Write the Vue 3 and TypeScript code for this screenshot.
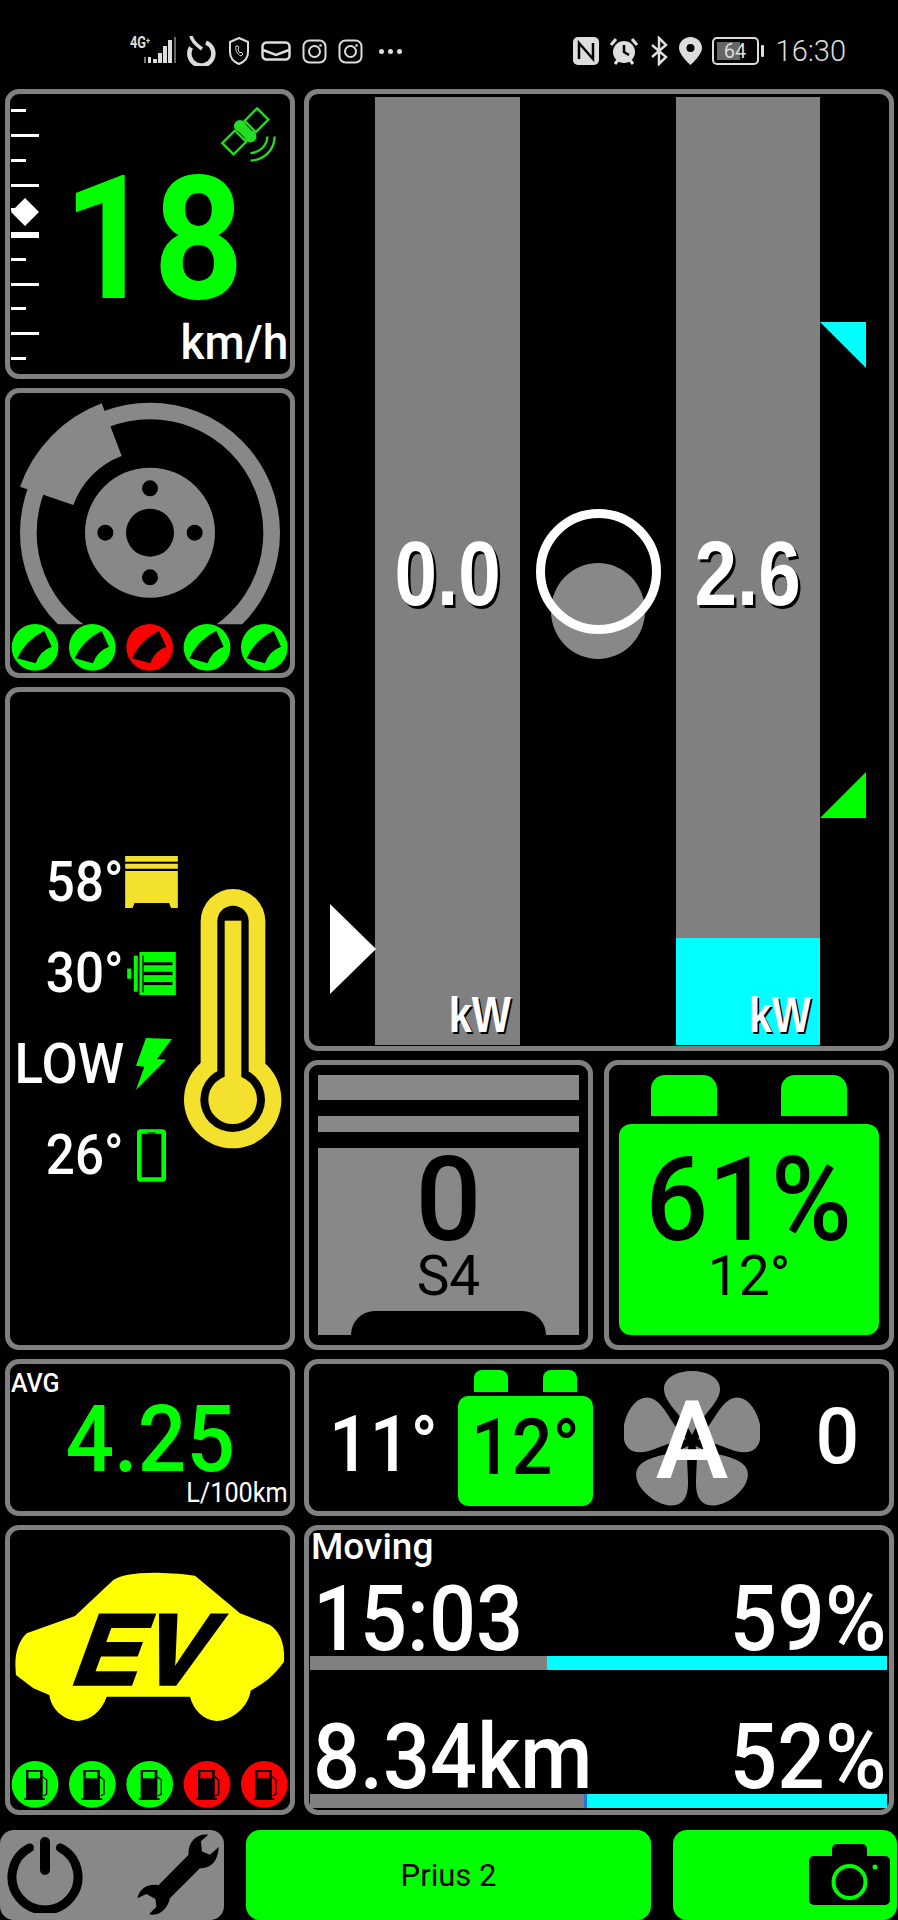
<template>
  <div class="page">
    <div class="status">
      <div class="status-group left">
        <div class="net">
          <span class="net-type">4G<sup>+</sup></span>
          <svg width="32" height="28" viewBox="0 0 32 28">
            <g fill="#ddd">
              <rect x="0" y="20" width="2" height="6" fill="#777" />
              <rect x="4" y="20" width="3" height="6" />
              <rect x="9" y="22" width="4" height="4" />
              <rect x="14" y="16" width="4" height="10" />
              <rect x="19" y="9" width="4" height="17" />
              <rect x="24" y="3" width="4" height="23" />
              <rect x="30" y="0" width="2" height="26" fill="#666" />
            </g>
          </svg>
        </div>
        <svg width="30" height="30" viewBox="0 0 30 30" fill="none" stroke="#ddd">
          <path d="M19 6.500a12 12 0 1 1-15 5" stroke-width="4.500" />
          <path d="M4 0c1 6 7 10 11 13" stroke-width="3.500" />
        </svg>
        <svg width="22" height="28" viewBox="0 0 22 28" fill="none" stroke="#ddd" stroke-width="2">
          <path d="M11 1l9 4v10c0 6-4 10-9 12C6 25 2 21 2 15V5z" />
          <path d="M8 9c-1 4 1 8 5 10l2-2-2-2-1 1c-1-1-2-3-2-4l1-1-1-2z" stroke-width="1" />
        </svg>
        <svg width="30" height="20" viewBox="0 0 30 20" fill="none" stroke="#ddd" stroke-width="2.500">
          <rect x="1.500" y="1.500" width="27" height="17" rx="4" />
          <path d="M2 9l13 5 13-5" />
        </svg>
        <svg v-for="n in 2" :key="n" width="25" height="25" viewBox="0 0 25 25" fill="none" stroke="#ddd" stroke-width="2">
          <rect x="1.500" y="1.500" width="22" height="22" rx="6" />
          <circle cx="12.500" cy="12.500" r="5.500" />
          <circle cx="18.500" cy="6.500" r="1.300" fill="#ddd" stroke="none" />
        </svg>
        <span class="dots"><i></i><i></i><i></i></span>
      </div>
      <div class="status-group right">
        <svg width="26" height="28" viewBox="0 0 26 28">
          <rect x="0" y="0" width="26" height="28" rx="5" fill="#ddd" />
          <path d="M6 22V6l14 16V6" fill="none" stroke="#000" stroke-width="2.500" />
        </svg>
        <svg width="30" height="28" viewBox="0 0 30 28">
          <circle cx="15" cy="15" r="11" fill="#ddd" />
          <path d="M2 8l5-6M28 8l-5-6M6 27l3-4M24 27l-3-4" stroke="#ddd" stroke-width="3" />
          <path d="M15 8v7l5 3" fill="none" stroke="#000" stroke-width="2.500" />
        </svg>
        <svg width="20" height="30" viewBox="0 0 20 30" fill="none" stroke="#ddd" stroke-width="2.500">
          <path d="M3 9l14 12-7 7V2l7 7L3 21" />
        </svg>
        <svg width="23" height="28" viewBox="0 0 23 28">
          <path fill-rule="evenodd" fill="#ddd" d="M11.500 0C5 0 0 5 0 11c0 7 11.500 17 11.500 17S23 18 23 11C23 5 18 0 11.500 0zm0 7a4 4 0 1 1 0 8 4 4 0 0 1 0-8z" />
        </svg>
        <div class="phone-batt">
          <div class="phone-batt-body">
            <span class="phone-batt-fill"></span>
            <span class="phone-batt-text">64</span>
          </div>
          <span class="phone-batt-nub"></span>
        </div>
        <span class="clock">16:30</span>
      </div>
    </div>

    <div class="dash">
      <div class="col">
        <section class="panel speed">
          <div class="scale">
            <div v-for="(t, i) in ticks" :key="i" class="tick-slot">
              <span class="tick" :class="t"></span>
            </div>
          </div>
          <span class="diamond"></span>
          <svg class="sat" width="58" height="58" viewBox="660 60 175 175">
            <g fill="none" stroke="#22dd22" stroke-width="7">
              <path d="M772 70l34 34-38 38-34-34z" />
              <path d="M667 175l34 34 38-38-34-34z" />
              <path d="M752 205c28-2 50-22 51-50" />
              <path d="M752 228c42-2 72-32 73-73" />
            </g>
            <circle cx="720" cy="123" r="18" fill="#22dd22" />
            <circle cx="752" cy="155" r="18" fill="#22dd22" />
            <path d="M720 123l32 32" stroke="#22dd22" stroke-width="30" />
          </svg>
          <div class="speed-main">
            <div class="speed-value"><span>{{ speed }}</span></div>
            <div class="speed-unit"><span>km/h</span></div>
          </div>
        </section>

        <section class="panel brake">
          <svg width="280" height="280" viewBox="30 24 840 840">
            <defs>
              <clipPath id="ringclip"><rect x="0" y="0" width="900" height="718" /></clipPath>
            </defs>
            <circle cx="450" cy="443" r="365" fill="none" stroke="#888" stroke-width="50" clip-path="url(#ringclip)" />
            <path d="M60 305A414 414 0 0 1 305 55L365 213A245 245 0 0 0 220 360Z" fill="#888" />
            <circle cx="450" cy="443" r="195" fill="#888" />
            <circle cx="450" cy="443" r="72" fill="#000" />
            <circle cx="450" cy="310" r="24" fill="#000" />
            <circle cx="450" cy="577" r="24" fill="#000" />
            <circle cx="316" cy="443" r="24" fill="#000" />
            <circle cx="584" cy="443" r="24" fill="#000" />
            <g v-for="(c, i) in brakePads" :key="i" :transform="`translate(${105 + i * 172} 787)`">
              <circle r="70" :fill="c" />
              <path d="M-53 33Q-30-20 28-50L50-2Q15 10 2 48Z" fill="#000" />
            </g>
          </svg>
        </section>

        <section class="panel temps">
          <div class="temp-rows">
            <div class="temp-row">
              <span class="temp-text"><span class="squeeze">58°</span></span>
              <div class="temp-icon">
                <svg width="53" height="52" viewBox="373 75 157 155">
                  <g fill="#f4e12e">
                    <rect x="373" y="75" width="157" height="17" />
                    <rect x="373" y="98" width="157" height="15" />
                    <path d="M373 120h157v110h-20l-6-15H401l-6 15h-22z" />
                  </g>
                </svg>
              </div>
            </div>
            <div class="temp-row">
              <span class="temp-text"><span class="squeeze">30°</span></span>
              <div class="temp-icon">
                <svg width="49" height="43" viewBox="378 362 147 130">
                  <g fill="#00ff00">
                    <rect x="378" y="412" width="12" height="31" />
                    <rect x="398" y="373" width="12" height="109" />
                    <rect x="415" y="362" width="110" height="130" />
                  </g>
                  <g fill="#000">
                    <rect x="428" y="393" width="87" height="9" />
                    <rect x="428" y="422" width="87" height="10" />
                    <rect x="428" y="453" width="87" height="9" />
                    <rect x="424" y="372" width="4" height="112" />
                  </g>
                </svg>
              </div>
            </div>
            <div class="temp-row">
              <span class="temp-text"><span class="squeeze wide">LOW</span></span>
              <div class="temp-icon bolt">
                <svg width="36" height="52" viewBox="407 622 108 156">
                  <path d="M437 622l78 3-45 60 27 2-90 91 25-70-25-3z" fill="#00ff00" />
                </svg>
              </div>
            </div>
            <div class="temp-row">
              <span class="temp-text"><span class="squeeze">26°</span></span>
              <div class="temp-icon">
                <svg width="29" height="53" viewBox="0 0 88 160">
                  <rect x="7" y="7" width="74" height="146" rx="4" fill="none" stroke="#00ff00" stroke-width="14" />
                  <rect x="32" y="10" width="24" height="3" fill="#000" />
                </svg>
              </div>
            </div>
          </div>
          <svg class="thermo" width="98" height="260" viewBox="553 175 292 780">
            <g fill="#f4e12e">
              <circle cx="698" cy="807" r="146" />
              <rect x="602" y="175" width="194" height="640" rx="97" />
            </g>
            <g fill="#000">
              <circle cx="698" cy="807" r="97" />
              <rect x="652" y="225" width="94" height="560" rx="47" />
            </g>
            <g fill="#f4e12e">
              <circle cx="698" cy="807" r="73" />
              <rect x="674" y="270" width="50" height="500" />
            </g>
          </svg>
        </section>

        <section class="panel avg">
          <div class="avg-label">AVG</div>
          <div class="avg-value"><span class="squeeze-c">4.25</span></div>
          <div class="avg-unit"><span>L/100km</span></div>
        </section>

        <section class="panel ev">
          <svg width="280" height="280" viewBox="30 30 840 840">
            <path
              d="M80 340L225 288L340 180C370 160 450 150 585 167L720 280L810 315C840 335 855 370 852 425C820 470 790 490 752 512C745 560 700 600 650 603C610 600 580 570 570 530L320 530C305 575 270 600 235 603C190 600 155 570 148 525L100 505L48 465C42 410 50 370 80 340Z"
              fill="#ffff00"
            />
            <text class="ev-text" transform="translate(205 492) skewX(-20)" x="0" y="0" textLength="400" lengthAdjust="spacingAndGlyphs">EV</text>
            <g v-for="(c, i) in fuelIcons" :key="i" :transform="`translate(${105 + i * 172} 793)`">
              <circle r="70" :fill="c" />
              <rect x="-27" y="-43" width="50" height="88" fill="#000" />
              <rect x="-20" y="-38" width="35" height="20" :fill="c" />
              <rect x="-33" y="42" width="63" height="5" fill="#000" />
              <path d="M23-23l12 10v42l-10 6" fill="none" stroke="#000" stroke-width="4" />
            </g>
          </svg>
        </section>
      </div>

      <div class="col">
        <section class="panel power">
          <div class="gutter"></div>
          <div class="bar">
            <span class="bar-value">0.0</span>
            <span class="bar-unit">kW</span>
          </div>
          <div class="ball">
            <span class="ball-shade"></span>
            <span class="ball-ring"></span>
          </div>
          <div class="bar second">
            <span class="bar-fill" :style="{ height: regenHeight + 'px' }"></span>
            <span class="bar-value">2.6</span>
            <span class="bar-unit">kW</span>
          </div>
          <span class="mark white"></span>
          <span class="mark cyan"></span>
          <span class="mark green"></span>
        </section>

        <div class="pair">
          <section class="panel gear">
            <div class="ring-bar big"></div>
            <div class="ring-bar small"></div>
            <div class="piston">
              <div class="gear-num">0</div>
              <div class="gear-mode">S4</div>
              <span class="piston-notch"></span>
            </div>
          </section>
          <section class="panel soc">
            <div class="terminals"><span></span><span></span></div>
            <div class="soc-body">
              <div class="soc-value"><span class="soc-pct">61%</span></div>
              <div class="soc-temp">12°</div>
            </div>
          </section>
        </div>

        <section class="panel climate">
          <div class="out-temp"><span class="squeeze-c">11°</span></div>
          <div class="mini-batt">
            <div class="mini-terminals"><span></span><span></span></div>
            <div class="mini-body"><span class="squeeze-c">12°</span></div>
          </div>
          <svg class="fan" width="136" height="136" viewBox="-68 -71 136 136">
            <path
              v-for="a in fanAngles"
              :key="a"
              :transform="`rotate(${a})`"
              d="M0-6C-8-24-28-38-28-52C-28-64-14-70 0-70C14-70 28-64 28-52C28-38 8-24 0-6Z"
              fill="#888"
            />
            <text class="fan-text" x="0" y="37" text-anchor="middle">A</text>
          </svg>
          <div class="fan-speed">0</div>
        </section>

        <section class="panel trip">
          <div class="trip-label">Moving</div>
          <div v-for="row in tripRows" :key="row.pct" class="trip-row">
            <div class="trip-line">
              <span class="trip-left">{{ row.label }}</span>
              <span class="trip-right">{{ row.pct }}%</span>
            </div>
            <div class="trip-bar">
              <span class="trip-fill" :style="{ width: row.pct + '%' }"></span>
            </div>
          </div>
        </section>
      </div>
    </div>

    <div class="buttons">
      <div class="btn tools">
        <svg width="76" height="76" viewBox="0 0 76 76" fill="none" stroke="#000">
          <path d="M53.500 10.900A33 33 0 1 1 22.500 10.900" stroke-width="9" stroke-linecap="round" />
          <path d="M38 5V33" stroke-width="10" stroke-linecap="round" />
        </svg>
        <svg width="82" height="82" viewBox="412 943 245 245">
          <path d="M625 945C590 940 563 968 566 1005L476 1096C445 1090 420 1105 413 1135L440 1122L467 1137L470 1160L448 1183C480 1190 505 1165 510 1135L600 1045C630 1048 655 1025 656 982L630 1005L606 995L603 965Z" fill="#000" />
        </svg>
      </div>
      <div class="btn name">Prius 2</div>
      <div class="btn cam">
        <svg width="82" height="62" viewBox="811 1845 82 62">
          <path d="M834 1857v-7a5 5 0 0 1 5-5h25a5 5 0 0 1 5 5v7h18a5 5 0 0 1 5 5v39a5 5 0 0 1-5 5h-71a5 5 0 0 1-5-5v-39a5 5 0 0 1 5-5z" fill="#000" />
          <circle cx="851.500" cy="1883" r="16" fill="none" stroke="#00ff00" stroke-width="4" />
          <circle cx="877" cy="1868" r="2.500" fill="#00ff00" />
        </svg>
      </div>
    </div>
  </div>
</template>

<script setup lang="ts">
const speed = 18
const regenHeight = 107

const ticks = ['s', 'l', 's', 'l', 's', 'x', 's', 'l', 's', 'l', 's']

const green = '#00ff00'
const red = '#ff0000'
const brakePads = [green, green, red, green, green]
const fuelIcons = [green, green, green, red, red]

const fanAngles = [0, 72, 144, 216, 288]

const tripRows = [
  { label: '15:03', pct: 59 },
  { label: '8.34km', pct: 52 },
]
</script>

<style>
html,
body {
  background: #000;
}
</style>

<style scoped>
.page {
  width: 898px;
  height: 1920px;
  background: #000;
  overflow: hidden;
  font-family: Roboto, "Liberation Sans", sans-serif;
  color: #fff;
}

.status {
  height: 89px;
  box-sizing: border-box;
  padding: 13px 52px 0 130px;
  display: flex;
  align-items: center;
  justify-content: space-between;
}

.status-group {
  display: flex;
  align-items: center;
}

.status-group.left {
  gap: 11px;
}

.status-group.right {
  gap: 10px;
}

.net {
  display: flex;
  align-items: flex-end;
  width: 46px;
  position: relative;
  height: 28px;
  justify-content: flex-end;
}

.net-type {
  position: absolute;
  left: 0;
  top: -2px;
  font-size: 16px;
  font-weight: 700;
  line-height: 1;
  color: #ddd;
  transform: scaleX(0.8);
  transform-origin: left center;
}

.net-type sup {
  font-size: 9px;
  vertical-align: 4px;
  line-height: 0;
}

.dots {
  display: flex;
  gap: 4px;
  margin-left: 5px;
}

.dots i {
  width: 5px;
  height: 5px;
  border-radius: 50%;
  background: #ddd;
}

.phone-batt {
  display: flex;
  align-items: center;
  gap: 2px;
}

.phone-batt-body {
  position: relative;
  width: 47px;
  height: 28px;
  box-sizing: border-box;
  border: 2px solid #ddd;
  border-radius: 5px;
  padding: 3px;
}

.phone-batt-fill {
  display: block;
  width: 64%;
  height: 100%;
  background: #666;
}

.phone-batt-text {
  position: absolute;
  inset: 0;
  text-align: center;
  font-size: 20px;
  line-height: 24px;
  color: #ddd;
}

.phone-batt-nub {
  width: 3px;
  height: 12px;
  background: #ddd;
  border-radius: 1px;
}

.clock {
  margin-left: 2px;
  font-size: 29px;
  font-weight: 300;
  color: #ddd;
  line-height: 1;
}

.dash {
  margin-left: 5px;
  width: 889px;
  display: grid;
  grid-template-columns: 290px 590px;
  column-gap: 9px;
}

.col {
  display: flex;
  flex-direction: column;
  gap: 9px;
}

.panel {
  box-sizing: border-box;
  border: 5px solid #808080;
  border-radius: 14px;
  position: relative;
}

.squeeze,
.squeeze-c {
  display: inline-block;
  transform: scaleX(0.93);
}

.squeeze {
  transform-origin: right center;
}

.squeeze.wide {
  transform: scaleX(0.96);
}

.squeeze-c {
  transform-origin: center;
}

/* speed */
.speed {
  height: 290px;
  display: flex;
}

.scale {
  width: 30px;
  padding: 4.6px 0 0 1px;
  flex: none;
}

.tick-slot {
  height: 24.75px;
  display: flex;
  align-items: center;
}

.tick {
  display: block;
  height: 3px;
  background: #fff;
}

.tick.s {
  width: 15px;
}

.tick.l {
  width: 28px;
}

.tick.x {
  width: 28px;
  height: 6px;
}

.diamond {
  position: absolute;
  left: 1px;
  top: 104px;
  width: 28px;
  height: 28px;
  background: #fff;
  clip-path: polygon(50% 0, 100% 50%, 50% 100%, 0 50%);
}

.sat {
  position: absolute;
  left: 210px;
  top: 11px;
}

.speed-main {
  flex: 1;
  display: flex;
  flex-direction: column;
}

.speed-value {
  margin: 80px 0 0 22px;
  font-size: 173px;
  font-weight: 700;
  line-height: 130px;
  color: #00ff00;
}

.speed-value span {
  display: inline-block;
  transform: scaleX(0.91);
  transform-origin: left center;
}

.speed-unit {
  margin-top: 15px;
  text-align: right;
  font-size: 48px;
  font-weight: 500;
  line-height: 1;
  padding-right: 2px;
}

.speed-unit span {
  display: inline-block;
  transform: scaleX(0.96);
  transform-origin: right center;
}

/* brake */
.brake {
  height: 290px;
}

.brake svg,
.ev svg {
  display: block;
}

/* temps */
.temps {
  height: 663px;
  display: flex;
  align-items: center;
}

.temp-row {
  height: 91px;
  display: flex;
  align-items: center;
}

.temp-text {
  width: 114px;
  text-align: right;
  font-size: 55px;
  font-weight: 500;
  line-height: 1;
}

.temp-icon {
  width: 54px;
  display: flex;
  justify-content: center;
}

.temp-icon.bolt {
  padding-left: 6px;
  box-sizing: border-box;
}

.temp-icon svg {
  display: block;
}

.thermo {
  margin-left: 6px;
}

/* avg */
.avg {
  height: 157px;
  padding-top: 7px;
}

.avg-label {
  padding-left: 1px;
  font-size: 25px;
  font-weight: 500;
  line-height: 1;
}

.avg-value {
  margin-top: 9px;
  text-align: center;
  font-size: 92px;
  font-weight: 500;
  line-height: 70px;
  color: #00ff00;
}

.avg-unit {
  margin-top: 4px;
  padding-right: 2px;
  text-align: right;
  font-size: 28px;
  font-weight: 400;
  line-height: 1;
}

.avg-unit span {
  display: inline-block;
  transform: scaleX(0.9);
  transform-origin: right center;
}

/* ev */
.ev {
  height: 290px;
}

.ev-text {
  font-family: "Liberation Sans", sans-serif;
  font-weight: 700;
  font-size: 300px;
  fill: #000;
  stroke: #000;
  stroke-width: 10px;
}

/* power */
.power {
  height: 962px;
  padding: 3px 0 1px;
  display: flex;
}

.gutter {
  width: 66px;
}

.bar {
  position: relative;
  width: 145px;
  background: #808080;
  display: flex;
  align-items: center;
  justify-content: center;
}

.bar.second {
  width: 144px;
}

.bar-fill {
  position: absolute;
  left: 0;
  right: 0;
  bottom: 0;
  background: #00ffff;
}

.bar-value {
  position: relative;
  top: 3px;
  display: inline-block;
  font-family: "Liberation Sans", sans-serif;
  font-weight: 700;
  font-size: 90px;
  line-height: 1;
  text-shadow: 3px 3px 0 #000;
  transform: scaleX(0.85);
}

.bar-unit {
  position: absolute;
  right: 9px;
  bottom: 5px;
  font-family: "Liberation Sans", sans-serif;
  font-weight: 700;
  font-size: 50px;
  line-height: 1;
  text-shadow: 2px 2px 0 #000;
  transform: scaleX(0.83);
  transform-origin: right center;
}

.ball {
  position: relative;
  width: 156px;
  display: flex;
  align-items: center;
  justify-content: center;
}

.ball-ring {
  position: relative;
  width: 125px;
  height: 125px;
  box-sizing: border-box;
  border: 9px solid #fff;
  border-radius: 50%;
}

.ball-shade {
  position: absolute;
  left: 31px;
  top: 466px;
  width: 94px;
  height: 96px;
  border-radius: 50%;
  background: #888;
}

.mark {
  position: absolute;
}

.mark.white {
  left: 21px;
  top: 810px;
  width: 46px;
  height: 90px;
  background: #fff;
  clip-path: polygon(0 0, 100% 50%, 0 100%);
}

.mark.cyan {
  left: 511px;
  top: 228px;
  width: 46px;
  height: 46px;
  background: #00ffff;
  clip-path: polygon(0 0, 100% 0, 100% 100%);
}

.mark.green {
  left: 511px;
  top: 678px;
  width: 46px;
  height: 46px;
  background: #00ff00;
  clip-path: polygon(100% 0, 100% 100%, 0 100%);
}

/* gear + soc */
.pair {
  display: flex;
  gap: 11px;
}

.gear {
  width: 289px;
  height: 290px;
  padding: 10px 9px;
  display: flex;
  flex-direction: column;
  color: #000;
}

.ring-bar {
  background: #888;
  flex: none;
}

.ring-bar.big {
  height: 25px;
}

.ring-bar.small {
  height: 16px;
  margin-top: 16px;
}

.piston {
  position: relative;
  flex: 1;
  margin-top: 16px;
  background: #888;
  text-align: center;
}

.gear-num {
  margin-top: 7px;
  font-size: 116px;
  font-weight: 500;
  line-height: 90px;
}

.gear-mode {
  margin-top: 9px;
  font-size: 55px;
  font-weight: 400;
  line-height: 44px;
}

.piston-notch {
  position: absolute;
  left: 33px;
  right: 33px;
  bottom: 0;
  height: 24px;
  background: #000;
  border-radius: 24px 24px 0 0;
}

.soc {
  width: 290px;
  height: 290px;
  padding: 10px;
  display: flex;
  flex-direction: column;
  color: #000;
}

.terminals {
  display: flex;
  justify-content: space-between;
  padding: 0 32px;
}

.terminals span {
  width: 66px;
  height: 41px;
  background: #00ff00;
  border-radius: 14px 14px 0 0;
}

.soc-body {
  flex: 1;
  margin-top: 8px;
  padding-top: 31px;
  background: #00ff00;
  border-radius: 12px;
  text-align: center;
}

.soc-value {
  font-size: 116px;
  font-weight: 500;
  line-height: 90px;
}

.soc-pct {
  display: inline-block;
  transform: scaleX(0.95);
}

.soc-temp {
  margin-top: 9px;
  font-size: 55px;
  font-weight: 400;
  line-height: 44px;
}

/* climate */
.climate {
  height: 157px;
  display: flex;
  align-items: center;
}

.out-temp {
  width: 149px;
  padding-top: 16px;
  text-align: center;
  font-size: 77px;
  font-weight: 500;
  line-height: 1;
}

.mini-batt {
  width: 135px;
  color: #000;
}

.mini-terminals {
  display: flex;
  justify-content: space-between;
  padding: 0 16px;
}

.mini-terminals span {
  width: 34px;
  height: 22px;
  background: #00ff00;
  border-radius: 8px 8px 0 0;
}

.mini-body {
  margin-top: 4px;
  height: 110px;
  box-sizing: border-box;
  padding-bottom: 5px;
  background: #00ff00;
  border-radius: 10px;
  display: flex;
  align-items: center;
  justify-content: center;
  font-size: 77px;
  font-weight: 500;
  line-height: 1;
}

.fan {
  margin-left: 31px;
  flex: none;
}

.fan-text {
  font-family: Roboto, sans-serif;
  font-size: 110px;
  font-weight: 500;
  fill: #fff;
}

.fan-speed {
  flex: 1;
  padding-left: 26px;
  text-align: center;
  font-size: 77px;
  font-weight: 500;
  line-height: 1;
}

/* trip */
.trip {
  height: 290px;
}

.trip-label {
  margin-top: -2px;
  padding-left: 2px;
  font-size: 37px;
  font-weight: 500;
  line-height: 1;
}

.trip-row {
  margin-top: 10px;
  margin-bottom: 43px;
}

.trip-line {
  display: flex;
  justify-content: space-between;
  padding: 0 2px 0 4px;
  font-size: 90px;
  font-weight: 500;
  line-height: 1;
}

.trip-left {
  display: inline-block;
  transform: scaleX(0.92);
  transform-origin: left center;
}

.trip-right {
  display: inline-block;
  transform: scaleX(0.93);
  transform-origin: right center;
}

.trip-bar {
  margin: -9px 2px 0 1px;
  height: 14px;
  background: #808080;
  display: flex;
  justify-content: flex-end;
}

.trip-fill {
  display: block;
  height: 100%;
  background: #00ffff;
}

.trip-row:last-child .trip-fill {
  box-sizing: content-box;
  border-left: 3px solid #2277dd;
}

/* buttons */
.buttons {
  margin-top: 15px;
  height: 90px;
  display: flex;
  gap: 22px;
}

.btn {
  width: 224px;
  background: #00ff00;
  border-radius: 14px;
  display: flex;
  align-items: center;
  flex: none;
}

.btn.tools {
  background: #888;
  justify-content: space-between;
  padding: 0 5px 0 7px;
  box-sizing: border-box;
}

.btn.name {
  width: 405px;
  justify-content: center;
  color: #000;
  font-size: 31px;
}

.btn.cam {
  justify-content: flex-end;
  padding-right: 6px;
  box-sizing: border-box;
}
</style>
